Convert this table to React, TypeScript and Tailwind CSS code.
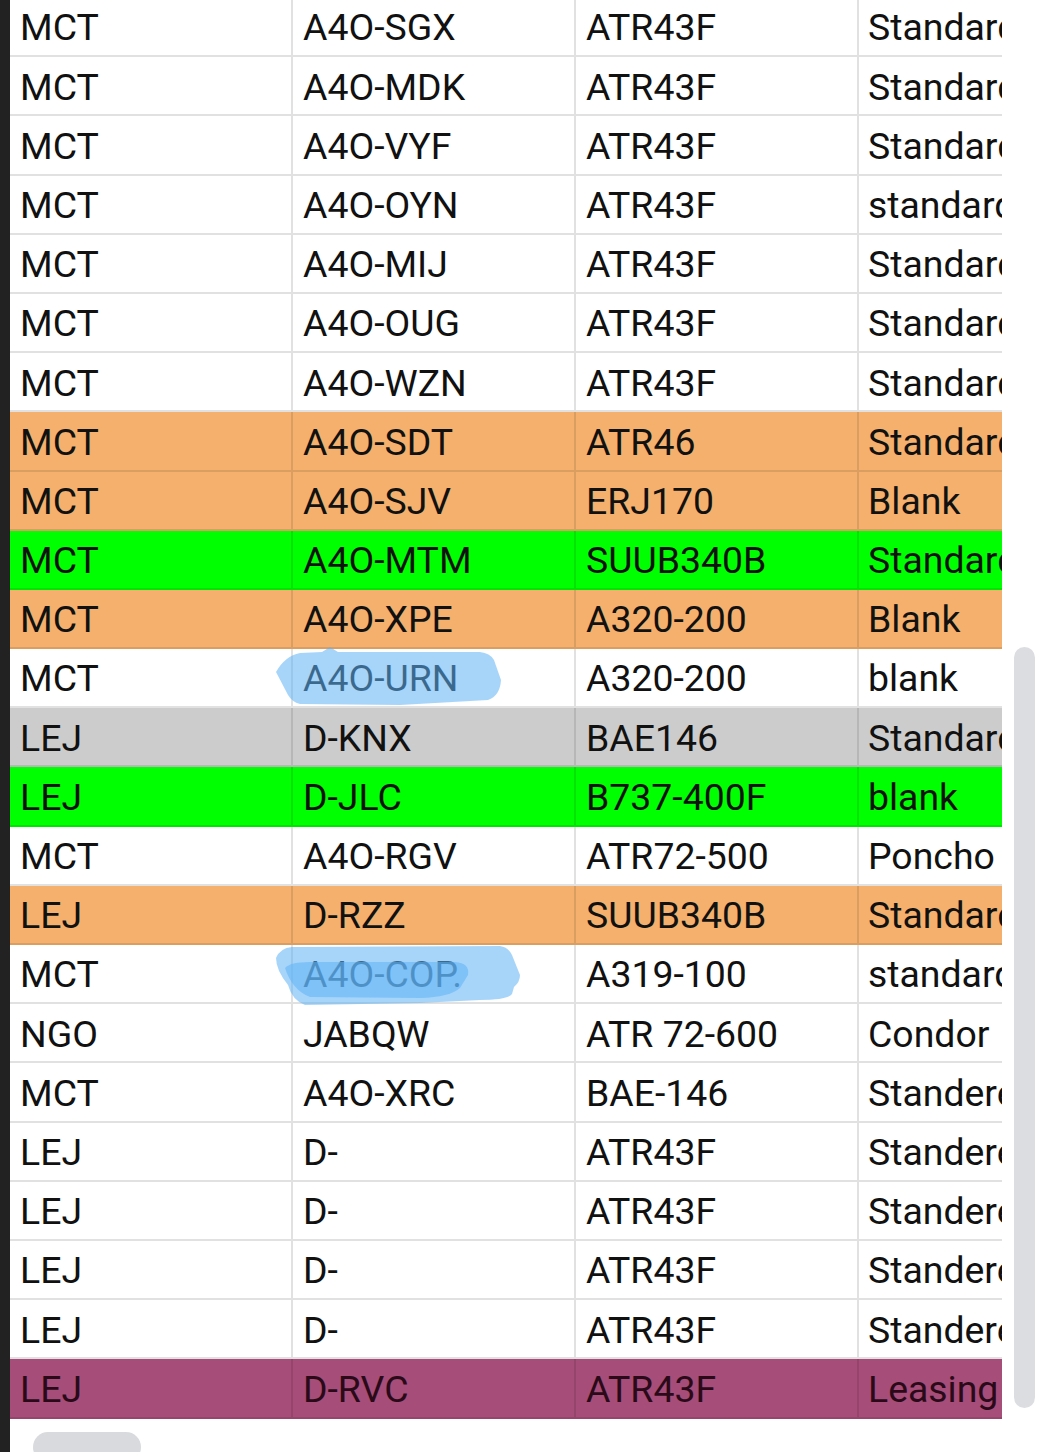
import React from "react";

type Row = { a: string; b: string; c: string; d: string; bg: string };

const W = "bg-white";
const O = "bg-[#f4b06c]";
const G = "bg-[#00ff00]";
const Y = "bg-[#cccccc]";
const P = "bg-[#a64d79]";

const rows: Row[] = [
  { a: "MCT", b: "A4O-SGX", c: "ATR43F", d: "Standard", bg: W },
  { a: "MCT", b: "A4O-MDK", c: "ATR43F", d: "Standard", bg: W },
  { a: "MCT", b: "A4O-VYF", c: "ATR43F", d: "Standard", bg: W },
  { a: "MCT", b: "A4O-OYN", c: "ATR43F", d: "standard", bg: W },
  { a: "MCT", b: "A4O-MIJ", c: "ATR43F", d: "Standard", bg: W },
  { a: "MCT", b: "A4O-OUG", c: "ATR43F", d: "Standard", bg: W },
  { a: "MCT", b: "A4O-WZN", c: "ATR43F", d: "Standard", bg: W },
  { a: "MCT", b: "A4O-SDT", c: "ATR46", d: "Standard", bg: O },
  { a: "MCT", b: "A4O-SJV", c: "ERJ170", d: "Blank", bg: O },
  { a: "MCT", b: "A4O-MTM", c: "SUUB340B", d: "Standard", bg: G },
  { a: "MCT", b: "A4O-XPE", c: "A320-200", d: "Blank", bg: O },
  { a: "MCT", b: "A4O-URN", c: "A320-200", d: "blank", bg: W },
  { a: "LEJ", b: "D-KNX", c: "BAE146", d: "Standard", bg: Y },
  { a: "LEJ", b: "D-JLC", c: "B737-400F", d: "blank", bg: G },
  { a: "MCT", b: "A4O-RGV", c: "ATR72-500", d: "Poncho", bg: W },
  { a: "LEJ", b: "D-RZZ", c: "SUUB340B", d: "Standard", bg: O },
  { a: "MCT", b: "A4O-COP.", c: "A319-100", d: "standard", bg: W },
  { a: "NGO", b: "JABQW", c: "ATR 72-600", d: "Condor", bg: W },
  { a: "MCT", b: "A4O-XRC", c: "BAE-146", d: "Standered", bg: W },
  { a: "LEJ", b: "D-", c: "ATR43F", d: "Standered", bg: W },
  { a: "LEJ", b: "D-", c: "ATR43F", d: "Standered", bg: W },
  { a: "LEJ", b: "D-", c: "ATR43F", d: "Standered", bg: W },
  { a: "LEJ", b: "D-", c: "ATR43F", d: "Standered", bg: W },
  { a: "LEJ", b: "D-RVC", c: "ATR43F", d: "Leasing", bg: P },
];

export default function App() {
  return (
    <div
      className="relative flex h-[1452px] w-[1041px] overflow-hidden bg-white"
      style={{ fontFamily: "Roboto, 'Noto Sans', sans-serif" }}
    >
      <div className="h-full w-[10px] shrink-0 bg-[#222222]" />
      <div className="flex flex-col">
        <div className="mt-[-2px] flex w-[992px] flex-col">
          {rows.map((r, i) => {
            const dark = r.bg === P;
            const txt = dark ? "text-[#2a0a18]" : "text-[#111111]";
            const line = r.bg === W ? "border-[#e1e1e1]" : "border-black/10";
            return (
              <div
                key={i}
                className={`flex h-[59.2px] border-b-2 ${line} ${r.bg} ${txt} text-[37.4px] leading-none`}
              >
                <div className={`flex w-[283px] shrink-0 items-center border-r-2 ${line} pl-[10px] pt-[3px]`}>{r.a}</div>
                <div className={`flex w-[283px] shrink-0 items-center border-r-2 ${line} pl-[10px] pt-[3px]`}>{r.b}</div>
                <div className={`flex w-[283px] shrink-0 items-center border-r-2 ${line} pl-[10px] pt-[3px]`}>{r.c}</div>
                <div className="flex w-[143px] shrink-0 items-center overflow-hidden whitespace-nowrap pl-[9px] pt-[3px]">{r.d}</div>
              </div>
            );
          })}
        </div>
      </div>

      {/* highlighter marks */}
      <svg className="pointer-events-none absolute left-0 top-0" width="1041" height="1452">
        <path
          d="M276 672 Q285 656 300 653 L322 652 L330 647 L338 652 L480 652 Q490 653 494 660 L501 680 Q500 696 488 700 L400 705 L300 704 Q292 702 288 695 Z"
          fill="#5fb2f5"
          opacity="0.55"
        />
        <path
          d="M276 958 Q280 948 292 947 L500 946 Q508 947 512 955 L520 975 Q520 982 514 987 L512 994 Q508 1000 480 1000 L420 1003 L305 1005 Q292 1000 288 985 Q276 970 276 958 Z"
          fill="#5fb2f5"
          opacity="0.55"
        />
        <path
          d="M285 968 Q290 962 310 962 L455 962 Q470 963 468 975 L460 988 Q450 997 420 998 L310 997 Q292 990 285 968 Z"
          fill="#5fb2f5"
          opacity="0.55"
        />
      </svg>

      {/* scrollbars */}
      <div className="absolute left-[1014px] top-[647px] h-[761px] w-[21px] rounded-full bg-[#dcdde0]" />
      <div className="absolute left-[33px] top-[1432px] h-[30px] w-[108px] rounded-full bg-[#d9dadd]" />
    </div>
  );
}
